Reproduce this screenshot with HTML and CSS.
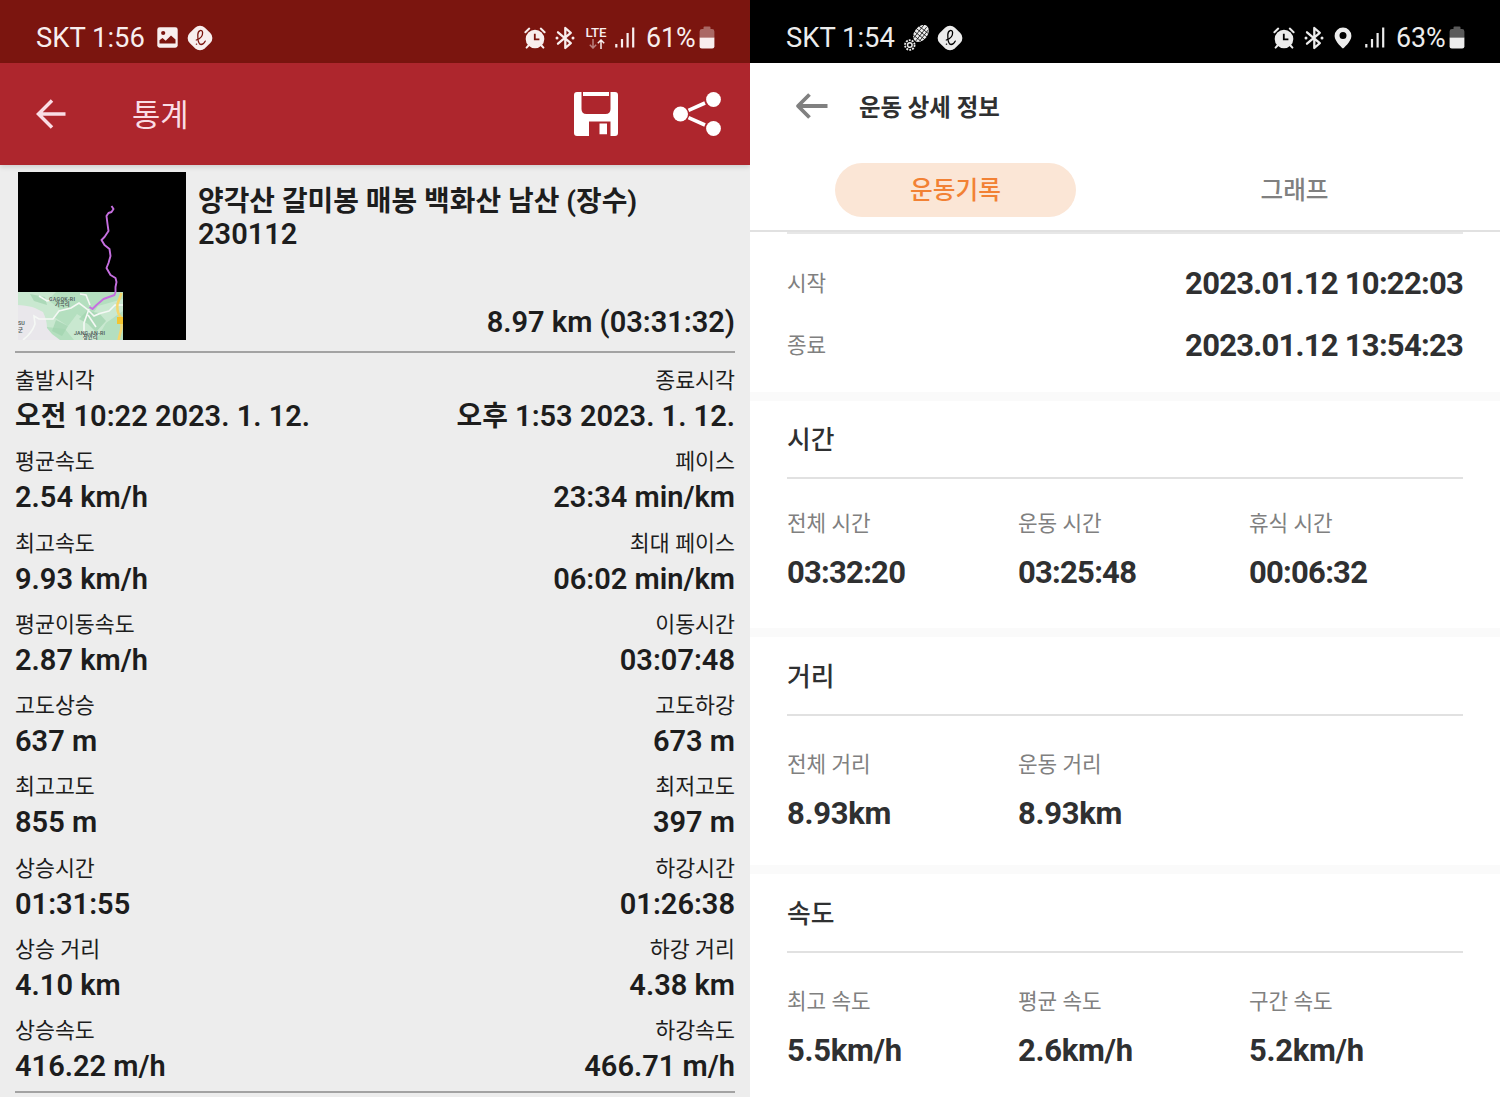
FILE: index.html
```html
<!DOCTYPE html>
<html lang="ko">
<head>
<meta charset="utf-8">
<title>운동 통계</title>
<link rel="stylesheet" href="styles.css">
</head>
<body>
<svg width="0" height="0" class="defs" aria-hidden="true">
  <symbol id="alarm" viewBox="0 0 22 22">
    <circle cx="11" cy="12" r="9.3" fill="currentColor"/>
    <path d="M1.4 5.2 5.2 1.600M20.6 5.2 16.8 1.600M4.5 18.5 2.6 20.6M17.5 18.5l1.9 2.1" stroke="currentColor" stroke-width="2" stroke-linecap="round"/>
    <path class="cut" d="M10.800 6.8v5.6h4.6" fill="none" stroke-width="1.8"/>
  </symbol>
  <symbol id="bt" viewBox="0 0 20 24">
    <path d="M3 6.3 15.8 17.2 10.3 22V2l5.500 4.800L3 17.7" fill="none" stroke="currentColor" stroke-width="2.3" stroke-linejoin="round" stroke-linecap="round"/>
    <circle cx="2" cy="12" r="1.5" fill="currentColor"/><circle cx="18" cy="12" r="1.5" fill="currentColor"/>
  </symbol>
  <symbol id="signal" viewBox="0 0 20 21">
    <path d="M1.3 20.500v-3.5M7 20.500v-8.500M12.600 20.500V6M18.200 20.500V.500" stroke="currentColor" stroke-width="2.2"/>
  </symbol>
  <symbol id="battery" viewBox="0 0 16 23">
    <path d="M4.500 3V1.500q0-1 1-1h5q1 0 1 1V3H13q2.400 0 2.400 2.400V11.500H.6V5.400Q.6 3 3 3z" fill="currentColor" opacity=".38"/>
    <path d="M.6 11.500h14.800v8.700q0 2.200-2.200 2.200H2.800Q.6 22.400.6 20.200z" fill="currentColor"/>
  </symbol>
  <symbol id="badge" viewBox="0 0 26 26">
    <rect x="2.200" y="2.200" width="21.600" height="21.600" rx="7" transform="rotate(45 13 13)" fill="currentColor"/>
    <path class="cut" d="M9.300 15C13 13.800 15.800 11 15.600 7.600 15.400 4.300 11 4.600 10.800 9.800 10.700 14 11.200 19.400 14 19.500 16 19.500 17.300 18 18.200 16.200M9.400 19.200h.2" fill="none" stroke-width="1.300" stroke-linecap="round"/>
  </symbol>
</svg>
<main class="screens">
  <section class="phone stats">
    <div class="status">
      <span class="carrier">SKT 1:56</span>
      <svg class="i-photo" width="21" height="21" viewBox="0 0 21 21"><rect x=".3" y=".3" width="20.400" height="20.400" rx="2.400" fill="currentColor"/><circle class="cutfill" cx="6.200" cy="6" r="2.100"/><path class="cutfill" d="M2.500 16.500V13.200l3-2.100 3.200 2.600 5.300-5.300 4.500 4v4.100z"/></svg>
      <svg class="i-badge" width="26" height="26"><use href="#badge"/></svg>
      <span class="grow"></span>
      <svg class="i-alarm" width="22" height="22"><use href="#alarm"/></svg>
      <svg class="i-bt" width="20" height="24"><use href="#bt"/></svg>
      <span class="lte"><span>LTE</span><svg width="16" height="10" viewBox="0 0 16 10" fill="none" stroke="currentColor" stroke-width="1.500"><path d="M4 0v9M.8 5.800 4 9l3.200-3.200" opacity=".5"/><path d="M12 10V1M8.800 4.200 12 1l3.200 3.200"/></svg></span>
      <svg class="i-signal" width="20" height="21"><use href="#signal"/></svg>
      <span class="pct">61%</span>
      <svg class="i-battery" width="16" height="23"><use href="#battery"/></svg>
    </div>
    <header class="appbar">
      <svg class="back" width="30" height="30" viewBox="0 0 30 30" fill="none" stroke="currentColor" stroke-width="3.500"><path d="M29.500 15H3M16 1.500 2.500 15 16 28.500"/></svg>
      <h1>통계</h1>
      <svg class="save" width="44" height="44" viewBox="0 0 44 44"><path d="M3 0h4.500v17q0 5 5 5h19q5 0 5-5V0H41q3 0 3 3v38q0 3-3 3h-4.500V29.500H15V44H3q-3 0-3-3V3Q0 0 3 0z" fill="currentColor"/><path d="M9 0h26v4H9zM25.500 31.500h7.500v10.700h-7.500z" fill="currentColor"/></svg>
      <svg class="share" width="48" height="44" viewBox="0 0 48 44"><g fill="currentColor"><circle cx="7.500" cy="22" r="7.500"/><circle cx="40.500" cy="7.500" r="7.400"/><circle cx="40.500" cy="36.500" r="7.400"/></g><path d="M15.500 18.300 32 11M15.500 25.700 32 33" stroke="currentColor" stroke-width="3.600"/></svg>
    </header>
    <div class="summary">
      <svg class="map" width="168" height="168" viewBox="0 0 168 168">
        <rect width="168" height="168"/>
        <path fill="#b4dfbf" d="M0 120h105v48H0z"/>
        <path fill="#c9e8d0" d="m0 120h38l-8 8 12 9-6 8 14 9 9-12 11 7 10-15 25-7v12L88 151l-10 17H56l-9-11-18-2-9-13L0 137z"/>
        <path fill="#9fd3ae" d="m61 147 8-8 12 2 7 8-10 11-8-8zM12 122l15 3 2 8-13-4zM38 148l12 6-6 10-10-5z" opacity=".7"/>
        <path fill="#e9e7eb" d="M0 133q12 1 17 3l8 4q4 8 4 16l5 6 8 6H0z"/>
        <path fill="none" stroke="#f5f8f5" stroke-width="1.600" d="M5 168q9-7 12-16l-1-8 5 3h14l6-8 12-3 8-5 8 6 7 7q6-3 15-5l6-6h8M71 137l-5 14v17M70 143l8 12M21 124l8 5 8-2M62 122l6 1 4 10"/>
        <path fill="none" stroke="#f5d66d" stroke-width="2.500" d="m103.500 121-4 11q-1 9 4 14v10l-3 12"/>
        <path fill="#f2c431" d="M99 145h6v7h-6z"/>
        <path fill="none" stroke="#c66fe0" stroke-width="1.900" stroke-linejoin="round" d="m93.500 34 2 3-2 3-3 1-2 3 1 8 1 7-4 6-3 3 3 5 5 4 1 7-2 7-2 5 4 7 5 3 1 4-1 5v5l-1 3-11 4-7 6-4 4-3-2"/>
        <g font-family="Roboto,Noto Sans CJK KR,sans-serif" font-size="5.300" font-weight="600" fill="#52605c"><text x="31" y="128.500" textLength="26">GAGOK-RI</text><text x="37" y="133.500">가곡리</text><text x="56" y="163" textLength="31">JANG-AN-RI</text><text x="65" y="167">장안리</text><text x="0" y="153">SU</text><text x="0" y="160">군</text></g>
      </svg>
      <div class="info">
        <h2><span>양각산 갈미봉 매봉 백화산 남산 (장수)</span><br>230112</h2>
        <strong>8.97 km (03:31:32)</strong>
      </div>
    </div>
    <dl class="table">
      <div><dt>출발시각</dt><dt>종료시각</dt><dd><span>오전</span> 10:22 2023. 1. 12.</dd><dd><span>오후</span> 1:53 2023. 1. 12.</dd></div>
      <div><dt>평균속도</dt><dt>페이스</dt><dd>2.54 km/h</dd><dd>23:34 min/km</dd></div>
      <div><dt>최고속도</dt><dt>최대 페이스</dt><dd>9.93 km/h</dd><dd>06:02 min/km</dd></div>
      <div><dt>평균이동속도</dt><dt>이동시간</dt><dd>2.87 km/h</dd><dd>03:07:48</dd></div>
      <div><dt>고도상승</dt><dt>고도하강</dt><dd>637 m</dd><dd>673 m</dd></div>
      <div><dt>최고고도</dt><dt>최저고도</dt><dd>855 m</dd><dd>397 m</dd></div>
      <div><dt>상승시간</dt><dt>하강시간</dt><dd>01:31:55</dd><dd>01:26:38</dd></div>
      <div><dt>상승 거리</dt><dt>하강 거리</dt><dd>4.10 km</dd><dd>4.38 km</dd></div>
      <div><dt>상승속도</dt><dt>하강속도</dt><dd>416.22 m/h</dd><dd>466.71 m/h</dd></div>
    </dl>
  </section>

  <section class="phone detail">
    <div class="status">
      <span class="carrier">SKT 1:54</span>
      <svg class="i-shoe" width="26" height="26" viewBox="0 0 26 26" fill="none" stroke="currentColor"><g transform="rotate(38 17 8.500)"><ellipse cx="17" cy="8.500" rx="6.600" ry="9.600" fill="currentColor" stroke="none"/><path class="cut" d="M11 4h12M10 7.500h14M10 11h14M11 14.500h12M14 0v17M17.500 0v18M20.500 1v15" stroke-width=".7"/></g><circle cx="5.800" cy="20" r="4.800" stroke-width="1.800" stroke-dasharray="1.900 1.100"/><circle cx="5.800" cy="20" r="2.300" stroke-width="1.500"/></svg>
      <svg class="i-badge" width="26" height="26"><use href="#badge"/></svg>
      <span class="grow"></span>
      <svg class="i-alarm" width="22" height="22"><use href="#alarm"/></svg>
      <svg class="i-bt" width="20" height="24"><use href="#bt"/></svg>
      <svg class="i-pin" width="18" height="22" viewBox="0 0 18 22"><path fill="currentColor" fill-rule="evenodd" d="M9 .5a8.400 8.400 0 0 1 8.400 8.400C17.400 14.500 9 21.500 9 21.500S.6 14.500.6 8.900A8.400 8.400 0 0 1 9 .5zM9 5a3.500 3.500 0 1 0 0 7 3.500 3.500 0 0 0 0-7z"/></svg>
      <svg class="i-signal" width="20" height="21"><use href="#signal"/></svg>
      <span class="pct">63%</span>
      <svg class="i-battery" width="16" height="23"><use href="#battery"/></svg>
    </div>
    <header class="titlebar">
      <svg width="33" height="26" viewBox="0 0 33 26" fill="none" stroke="currentColor" stroke-width="3.800"><path d="M32.500 13H3M14.500 1.500 3 13l11.500 11.500" stroke-linejoin="round"/></svg>
      <h1>운동 상세 정보</h1>
    </header>
    <nav class="tabs"><span class="active">운동기록</span><span>그래프</span></nav>
    <div class="times">
      <p><span>시작</span><b>2023.01.12 10:22:03</b></p>
      <p><span>종료</span><b>2023.01.12 13:54:23</b></p>
    </div>
    <section class="block first">
      <h2>시간</h2>
      <div class="cols">
        <p><span>전체 시간</span><b>03:32:20</b></p>
        <p><span>운동 시간</span><b>03:25:48</b></p>
        <p><span>휴식 시간</span><b>00:06:32</b></p>
      </div>
    </section>
    <section class="block">
      <h2>거리</h2>
      <div class="cols units">
        <p><span>전체 거리</span><b>8.93km</b></p>
        <p><span>운동 거리</span><b>8.93km</b></p>
      </div>
    </section>
    <section class="block">
      <h2>속도</h2>
      <div class="cols units">
        <p><span>최고 속도</span><b>5.5km/h</b></p>
        <p><span>평균 속도</span><b>2.6km/h</b></p>
        <p><span>구간 속도</span><b>5.2km/h</b></p>
      </div>
    </section>
  </section>
</main>
</body>
</html>
```

FILE: styles.css
```css
* { box-sizing: border-box; }
body { margin: 0; overflow: hidden; font-family: Roboto, "Noto Sans CJK KR", sans-serif; }
h1, h2, p, dl, dd { margin: 0; }
svg { display: block; flex: none; }
.defs { position: absolute; }
.screens { display: grid; grid-template-columns: 750px 750px; height: 1097px; overflow: hidden; }
.phone { height: 1097px; overflow: hidden; }
.stats { background: #ededed; color: #1d1d1d; }
.detail { background: #fff; color: #2f3031; }

.status { display: flex; align-items: center; height: 62.500px; padding: 13px 35px 0 36px; white-space: nowrap; font-size: 27.400px; line-height: 34px; }
.stats .status { --bar: #7b150f; background: var(--bar); color: #f8eeee; }
.detail .status { --bar: #000; background: var(--bar); color: #ececec; }
.cut { stroke: var(--bar); }
.cutfill { fill: var(--bar); }
.carrier { width: 109px; }
.grow { flex: 1; }
.i-photo { margin: 0 9px 0 12px; }
.i-shoe { margin: 0 7px 0 9px; }
.i-bt { margin-left: 9px; }
.lte { display: flex; flex-direction: column; align-items: center; margin-left: 10px; width: 24px; font-size: 13.300px; font-weight: 500; line-height: 13px; }
.lte span { margin-left: -2px; }
.i-pin { margin-left: 10px; }
.i-signal { margin: 0 11px 0 6px; }
.detail .i-signal { margin-left: 13px; }
.pct { width: 49px; margin-right: 4px; font-size: 26.800px; }

.appbar { display: flex; align-items: center; height: 102px; padding: 0 29px 0 36px; background: #ae262d; color: #fff; box-shadow: 0 2px 5px #0002; }
.appbar .back { color: #fadde5; }
.appbar h1 { flex: 1; margin-left: 66px; padding-top: 5px; color: #fadde5; font-size: 30.800px; font-weight: 400; line-height: 40px; }
.save { margin-right: 55px; }

.summary { display: flex; gap: 12px; height: 188.500px; margin: 0 15px; padding: 7.500px 0 0 3px; border-bottom: 2px solid #a3a3a3; }
.info { display: flex; flex: 1; flex-direction: column; justify-content: space-between; height: 167px; padding-top: 13px; }
.info h2, .info strong, .table dd { font-size: 29px; font-weight: 600; line-height: 34px; }
.info h2 { line-height: 33px; }
.info h2 span { font-size: 27.900px; font-weight: 700; }
.info strong { align-self: flex-end; }
.table dd span { font-size: 27.900px; font-weight: 700; }
.table { height: 731px; margin: 9px 15px 0; border-bottom: 2px solid #a3a3a3; }
.table div { display: grid; grid-template-columns: auto auto; grid-template-rows: 36px 36px; justify-content: space-between; height: 81.250px; }
.table dt { padding-top: 1px; font-size: 21.700px; line-height: 36px; }
.table dd { line-height: 36px; }
.table :nth-child(even of dt, dd) { text-align: right; }

.titlebar { display: flex; align-items: center; gap: 31px; height: 87px; padding-left: 45px; color: #808080; }
.titlebar h1 { padding-top: 3px; color: #2f3031; font-size: 23.400px; font-weight: 700; line-height: 34px; }
.tabs { display: grid; grid-template-columns: 241px 241px; gap: 98px; height: 82.500px; padding: 13.500px 0 0 85px; border-bottom: 2px solid #e1e1e1; }
.tabs span { height: 54px; padding-top: 1px; border-radius: 27px; color: #808080; font-size: 24.700px; font-weight: 500; line-height: 54px; text-align: center; }
.tabs .active { background: #fbe6d6; color: #f28134; }
.times { height: 160px; margin: 0 37px; padding-top: 19px; border-top: 2px solid #e7e7e7; }
.times p { display: flex; justify-content: space-between; height: 62px; line-height: 62px; }
.times span, .cols span { color: #808080; font-size: 21.300px; }
.times b, .cols b { font-size: 31px; font-weight: 700; letter-spacing: -.75px; }
.cols.units b { letter-spacing: -.3px; }
.block { height: 237px; padding: 0 37px; border-top: 9px solid #fafafa; }
.block h2 { height: 79px; border-bottom: 2px solid #e1e1e1; font-size: 25.800px; font-weight: 500; line-height: 80px; }
.cols { display: grid; grid-template-columns: repeat(3, 231px); padding-top: 32px; }
.cols span, .cols b { display: block; height: 49px; line-height: 34px; }
.first { height: 236px; }
.first h2 { height: 78px; line-height: 79px; }
.first .cols { padding-top: 28px; }
```
